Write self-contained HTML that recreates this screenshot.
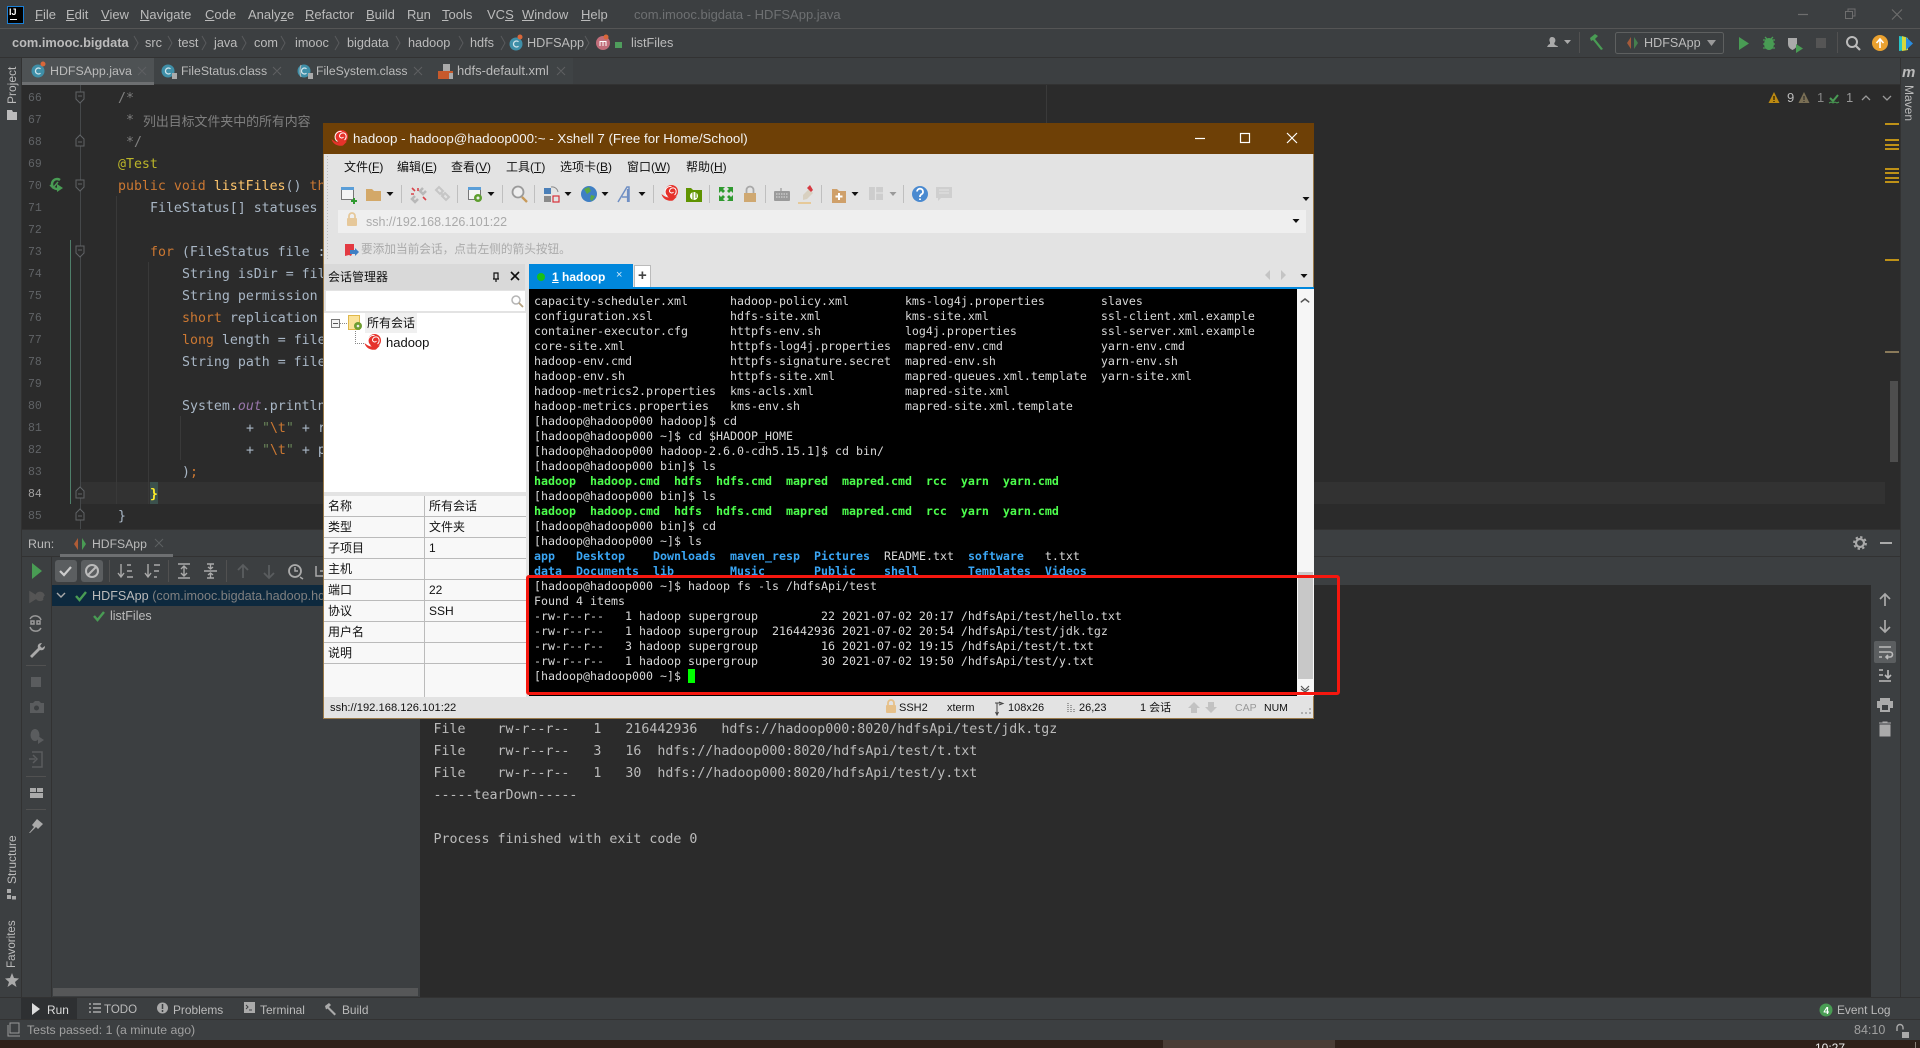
<!DOCTYPE html>
<html><head><meta charset="utf-8"><style>
html,body{margin:0;padding:0;background:#2b2b2b;width:1920px;height:1048px;overflow:hidden}
body{position:relative;font-family:"Liberation Sans","Noto Sans CJK SC",sans-serif;color:#bbb;font-size:13px}
.b,.t{position:absolute}
.t{white-space:pre;line-height:18px;height:18px}
.m{font-size:13px;top:6px;color:#bbb}
.br{font-size:12.7px;top:34px;color:#bbb}
.tab{font-size:12.6px;top:62px;color:#bbb}
.n{font-family:"Liberation Mono",monospace;font-size:11.5px;color:#606366;left:28px}
.c{font-family:"DejaVu Sans Mono",monospace;font-size:13.25px;line-height:22px;height:22px;color:#a9b7c6}
.k{color:#cc7832}.g{color:#808080}.s{color:#6a8759}
.con{font-family:"DejaVu Sans Mono",monospace;font-size:13.29px;line-height:22px;height:22px;color:#bbb;left:433.5px}
.tb{font-size:11.9px;top:1001px;color:#bbb}
svg{position:absolute;left:0;top:0;overflow:visible}
#x{position:absolute;left:323px;top:123px;width:991px;height:596px;background:#e3e3e3;z-index:10;box-shadow:inset 0 0 0 1px #9a7a4a}
.xm{font-size:12px;top:158px;color:#111}
.p{font-size:12px;color:#111}
pre{position:absolute;margin:0;left:534px;top:294px;font-family:"DejaVu Sans Mono",monospace;font-size:11.63px;line-height:15px;color:#d8d8d8}
pre b.g1{color:#4dff4d}pre b.b1{color:#3aa6f5}
.xs{font-size:11px;top:699px;color:#111}
</style></head><body>

<!-- IDE frame -->
<div class="b" style="left:0;top:0;width:1920px;height:28px;background:#3c3f41"></div>
<div class="b" style="left:0;top:28px;width:1920px;height:1px;background:#555"></div>
<div class="b" style="left:0;top:29px;width:1920px;height:28px;background:#3c3f41"></div>
<div class="b" style="left:0;top:57px;width:1920px;height:1px;background:#323232"></div>
<div class="b" style="left:0;top:58px;width:1920px;height:27px;background:#3c3f41"></div>
<div class="b" style="left:0;top:84px;width:1920px;height:1px;background:#323232"></div>
<div class="b" style="left:0;top:58px;width:21px;height:982px;background:#3c3f41"></div>
<div class="b" style="left:21px;top:58px;width:1px;height:939px;background:#323232"></div>
<div class="b" style="left:1900px;top:58px;width:20px;height:982px;background:#3c3f41;border-left:1px solid #323232;box-sizing:border-box"></div>

<!-- logo -->
<div class="b" style="left:7px;top:6px;width:15px;height:16px;background:#000;border:1px solid #1a7fd6"></div>
<div class="t" style="left:9px;top:5px;font:bold 9px/14px 'Liberation Sans';color:#fff">IJ</div>
<div class="b" style="left:10px;top:19px;width:7px;height:1px;background:#fff"></div>

<div class="t m" style="left:35px"><u>F</u>ile</div>
<div class="t m" style="left:66px"><u>E</u>dit</div>
<div class="t m" style="left:101px"><u>V</u>iew</div>
<div class="t m" style="left:140px"><u>N</u>avigate</div>
<div class="t m" style="left:205px"><u>C</u>ode</div>
<div class="t m" style="left:248px">Analy<u>z</u>e</div>
<div class="t m" style="left:305px"><u>R</u>efactor</div>
<div class="t m" style="left:366px"><u>B</u>uild</div>
<div class="t m" style="left:407px">R<u>u</u>n</div>
<div class="t m" style="left:442px"><u>T</u>ools</div>
<div class="t m" style="left:487px">VC<u>S</u></div>
<div class="t m" style="left:522px"><u>W</u>indow</div>
<div class="t m" style="left:581px"><u>H</u>elp</div>
<div class="t m" style="left:634px;color:#6e7072;font-size:13px">com.imooc.bigdata - HDFSApp.java</div>

<!-- breadcrumb -->
<div class="t br" style="left:12px;font-weight:bold;font-size:12.8px;color:#bbb">com.imooc.bigdata</div>
<div class="t br" style="left:145px">src</div>
<div class="t br" style="left:178px">test</div>
<div class="t br" style="left:214px">java</div>
<div class="t br" style="left:254px">com</div>
<div class="t br" style="left:295px">imooc</div>
<div class="t br" style="left:347px">bigdata</div>
<div class="t br" style="left:408px">hadoop</div>
<div class="t br" style="left:470px">hdfs</div>
<div class="t br" style="left:527px">HDFSApp</div>
<div class="t br" style="left:631px">listFiles</div>
<div class="t" style="left:1644px;top:34px;font-size:12.6px">HDFSApp</div>

<!-- tabs -->
<div class="b" style="left:22px;top:58px;width:132px;height:24px;background:#4e5254"></div>
<div class="b" style="left:22px;top:82px;width:132px;height:3px;background:#6d6f71"></div>
<div class="b" style="left:154px;top:58px;width:419px;height:26px;background:#3f4345"></div>
<div class="t tab" style="left:50px;font-size:12.4px">HDFSApp.java</div>
<div class="t tab" style="left:181px;font-size:12.3px">FileStatus.class</div>
<div class="t tab" style="left:316px;font-size:12.2px">FileSystem.class</div>
<div class="t tab" style="left:457px;font-size:13px">hdfs-default.xml</div>
<div class="t" style="font-size:12px;line-height:18px;color:#bbb;transform:rotate(-90deg);transform-origin:0 0;top:104px;left:3px">Project</div>

<!-- editor -->
<div class="b" style="left:22px;top:85px;width:1878px;height:444px;background:#2b2b2b"></div>
<div class="b" style="left:81px;top:482px;width:1804px;height:22px;background:#323232"></div>
<div class="b" style="left:1046px;top:85px;width:1px;height:444px;background:#3a3a3a"></div>
<div class="b" style="left:80px;top:85px;width:1px;height:444px;background:#45484a"></div>
<div class="b" style="left:70px;top:240px;width:1px;height:264px;background:#4f7f6a"></div>
<div class="b" style="left:116px;top:196px;width:1px;height:308px;background:#393939"></div>
<div class="b" style="left:148px;top:262px;width:1px;height:242px;background:#393939"></div>
<div class="b" style="left:180px;top:416px;width:1px;height:44px;background:#393939"></div>
<div class="b" style="left:1890px;top:381px;width:8px;height:81px;background:#4e4e4e"></div>
<div class="b" style="left:150px;top:482px;width:8px;height:22px;background:#3b514d"></div>

<div style="position:absolute;left:0;top:1px">
<div class="t n" style="top:89px">66</div><div class="t n" style="top:111px">67</div>
<div class="t n" style="top:133px">68</div><div class="t n" style="top:155px">69</div>
<div class="t n" style="top:177px">70</div><div class="t n" style="top:199px">71</div>
<div class="t n" style="top:221px">72</div><div class="t n" style="top:243px">73</div>
<div class="t n" style="top:265px">74</div><div class="t n" style="top:287px">75</div>
<div class="t n" style="top:309px">76</div><div class="t n" style="top:331px">77</div>
<div class="t n" style="top:353px">78</div><div class="t n" style="top:375px">79</div>
<div class="t n" style="top:397px">80</div><div class="t n" style="top:419px">81</div>
<div class="t n" style="top:441px">82</div><div class="t n" style="top:463px">83</div>
<div class="t n" style="top:485px;color:#a4a3a3">84</div><div class="t n" style="top:507px">85</div>

<div class="t c g" style="left:118px;top:87px">/*</div>
<div class="t c g" style="left:126px;top:109px">*</div>
<div class="t c g" style="left:143px;top:109px;font-family:'Noto Sans CJK SC',sans-serif;font-size:12.9px">列出目标文件夹中的所有内容</div>
<div class="t c g" style="left:126px;top:131px">*/</div>
<div class="t c" style="left:118px;top:153px;color:#bbb529">@Test</div>
<div class="t c" style="left:118px;top:175px"><span class="k">public void </span><span style="color:#ffc66d">listFiles</span>() <span class="k">throws</span></div>
<div class="t c" style="left:150px;top:197px">FileStatus[] statuses</div>
<div class="t c" style="left:150px;top:241px"><span class="k">for</span> (FileStatus file :</div>
<div class="t c" style="left:182px;top:263px">String isDir = file</div>
<div class="t c" style="left:182px;top:285px">String permission</div>
<div class="t c" style="left:182px;top:307px"><span class="k">short</span> replication</div>
<div class="t c" style="left:182px;top:329px"><span class="k">long</span> length = file</div>
<div class="t c" style="left:182px;top:351px">String path = file</div>
<div class="t c" style="left:182px;top:395px">System.<i style="color:#9876aa">out</i>.println</div>
<div class="t c" style="left:246px;top:417px">+ <span class="s">"<span class="k">\t</span>"</span> + r</div>
<div class="t c" style="left:246px;top:439px">+ <span class="s">"<span class="k">\t</span>"</span> + p</div>
<div class="t c" style="left:182px;top:461px">)<span class="k">;</span></div>
<div class="t c" style="left:150px;top:483px;color:#ffef28;font-weight:bold">}</div>
<div class="t c" style="left:118px;top:505px">}</div>
</div>
<div class="t" style="left:1787px;top:89px;font-size:13px">9</div>
<div class="t" style="left:1817px;top:89px;font-size:13px;color:#888">1</div>
<div class="t" style="left:1846px;top:89px;font-size:13px;color:#999">1</div>
<div class="t" style="width:60px;font-size:12px;transform:rotate(90deg);transform-origin:0 0;left:1918px;top:85px;color:#bbb">Maven</div>
<div class="t" style="left:1902px;top:64px;font:italic bold 15px/18px 'Liberation Sans';color:#bbb">m</div>

<!-- run panel -->
<div class="b" style="left:22px;top:529px;width:1878px;height:468px;background:#3c3f41"></div>
<div class="b" style="left:22px;top:529px;width:1878px;height:1px;background:#323232"></div>
<div class="b" style="left:22px;top:556px;width:1878px;height:1px;background:#323232"></div>
<div class="b" style="left:60px;top:554px;width:113px;height:3px;background:#6d6f71"></div>
<div class="b" style="left:51px;top:557px;width:1px;height:440px;background:#323232"></div>
<div class="b" style="left:420px;top:585px;width:1451px;height:412px;background:#2b2b2b"></div>
<div class="b" style="left:52px;top:585px;width:368px;height:21px;background:#0d293e"></div>
<div class="b" style="left:53px;top:988px;width:365px;height:8px;background:#565758"></div>
<div class="t" style="left:28px;top:535px;font-size:12.4px;color:#bbb">Run:</div>
<div class="t" style="left:92px;top:535px;font-size:12.2px;color:#bbb">HDFSApp</div>
<div class="t" style="left:92px;top:587px;font-size:12.6px;color:#bbb">HDFSApp <span style="color:#808080">(com.imooc.bigdata.hadoop.hdfs.HDFSAppTest)</span></div>
<div class="t" style="left:110px;top:607px;font-size:12.5px;color:#bbb">listFiles</div>
<div class="b" style="left:55px;top:560px;width:22px;height:22px;background:#5b5e60;border-radius:3px"></div>
<div class="b" style="left:81px;top:560px;width:22px;height:22px;background:#5b5e60;border-radius:3px"></div>

<div class="t con" style="top:719px">File    rw-r--r--   1   216442936   hdfs://hadoop000:8020/hdfsApi/test/jdk.tgz</div>
<div class="t con" style="top:741px">File    rw-r--r--   3   16  hdfs://hadoop000:8020/hdfsApi/test/t.txt</div>
<div class="t con" style="top:763px">File    rw-r--r--   1   30  hdfs://hadoop000:8020/hdfsApi/test/y.txt</div>
<div class="t con" style="top:785px">-----tearDown-----</div>
<div class="t con" style="top:829px">Process finished with exit code 0</div>

<!-- left strip labels -->
<div class="t" style="font-size:12px;transform:rotate(-90deg);transform-origin:0 0;left:3px;top:884px;color:#bbb">Structure</div>
<div class="t" style="font-size:11.6px;transform:rotate(-90deg);transform-origin:0 0;left:3px;top:968px;color:#bbb">Favorites</div>

<!-- bottom -->
<div class="b" style="left:0;top:997px;width:1920px;height:1px;background:#323232"></div>
<div class="b" style="left:0;top:998px;width:1920px;height:21px;background:#3c3f41"></div>
<div class="b" style="left:21px;top:998px;width:56px;height:21px;background:#2e3032"></div>
<div class="b" style="left:0;top:1019px;width:1920px;height:1px;background:#323232"></div>
<div class="b" style="left:0;top:1020px;width:1920px;height:20px;background:#3c3f41"></div>
<div class="t tb" style="left:47px;color:#ddd">Run</div>
<div class="t tb" style="left:104px;font-size:11.5px">TODO</div>
<div class="t tb" style="left:173px">Problems</div>
<div class="t tb" style="left:260px">Terminal</div>
<div class="t tb" style="left:342px">Build</div>
<div class="t tb" style="left:1837px">Event Log</div>
<div class="t" style="left:27px;top:1021px;font-size:12.3px;color:#a0a0a0">Tests passed: 1 (a minute ago)</div>
<div class="t" style="left:1854px;top:1021px;font-size:12.5px;color:#a0a0a0">84:10</div>
<div class="b" style="left:0;top:1040px;width:1920px;height:8px;background:#2f211a"></div>
<div class="b" style="left:1163px;top:1040px;width:172px;height:8px;background:#4a3d36"></div>
<div class="b" style="left:1915px;top:1042px;width:1px;height:6px;background:#8a8078"></div>
<div class="t" style="left:1815px;top:1041px;font-size:12px;color:#eee;height:7px;overflow:hidden;line-height:14px">10:27</div>

<!-- IDE icons -->
<svg width="1920" height="1048" fill="none">
<defs>
<g id="ci"><circle cx="0" cy="0" r="6.5" fill="#3f8fa8"/><path d="M2.5-2.2A3 3 0 1 0 2.5 2.2" stroke="#cfe3ea" stroke-width="1.3"/></g>
<g id="fold"><path d="M-4-5H4V2L0 6-4 2Z" stroke="#606366" fill="#2b2b2b"/><path d="M-2-1H2" stroke="#606366"/></g>
<g id="foldup"><path d="M-4 5H4V-2L0-6-4-2Z" stroke="#606366" fill="#2b2b2b"/><path d="M-2 1H2" stroke="#606366"/></g>
<path id="ck" d="M-5 0-1.5 4 5-4" stroke="#499c54" stroke-width="2.4"/>
</defs>
<!-- window ctl -->
<path d="M1798 14.5H1808" stroke="#6e6e6e" stroke-width="1.2"/>
<path d="M1845.5 11.5h7v7h-7zM1848 11.5v-2.5h7v7h-2.5" stroke="#6e6e6e"/>
<path d="M1892 9.5l10 10M1902 9.5l-10 10" stroke="#6e6e6e" stroke-width="1.1"/>
<!-- chevrons -->
<g stroke="#595b5d"><path d="M134 36l4 7-4 7M168 36l4 7-4 7M202 36l4 7-4 7M242 36l4 7-4 7M281 36l4 7-4 7M335 36l4 7-4 7M396 36l4 7-4 7M459 36l4 7-4 7M501 36l4 7-4 7M585 36l4 7-4 7"/></g>
<use href="#ci" x="516" y="44"/><circle cx="520" cy="37" r="2.5" fill="#d9673a"/>
<circle cx="603" cy="43" r="7" fill="#c16d7a"/><path d="M600 46v-5M603 46v-5M606 46v-5M600 41.5h6" stroke="#fff"/><circle cx="606" cy="37" r="2.5" fill="#d9673a"/>
<path d="M615 42h7v6h-7z" fill="#4f9d5c"/>
<!-- tabs icons -->
<use href="#ci" x="38" y="71"/><circle cx="43" cy="64" r="2.5" fill="#d9673a"/>
<use href="#ci" x="168" y="71"/><rect x="172" y="73" width="5" height="6" fill="#aaa"/>
<use href="#ci" x="304" y="71"/><rect x="308" y="73" width="5" height="6" fill="#aaa"/>
<path d="M301 65q-2 6 0 12" stroke="#bbb"/>
<path d="M443 64h7v7h-7z" fill="#aaa"/><rect x="438" y="71" width="15" height="8" fill="#c75a2c"/><rect x="449" y="73" width="4" height="6" fill="#aaa"/>
<g stroke="#5e6062" stroke-width="1"><path d="M138 67l8 8M146 67l-8 8M273 67l8 8M281 67l-8 8M414 67l8 8M422 67l-8 8M557 67l8 8M565 67l-8 8"/></g>
<path d="M7 112h10v8H7zM7 112v-2h5l1 2" fill="#bbb"/>
<!-- right toolbar -->
<path d="M1547 47c1-2 2-3 3-3v-2c-1-1-1-5 2-5s4 3 3 5c-1 1-1 2 0 3 2 1 3 1 3 2z" fill="#aaa"/>
<path d="M1564 40h7l-3.5 4z" fill="#aaa"/>
<path d="M1579.5 32v21" stroke="#515151"/>
<path d="M1590 38l5-4 3 2-3 3 8 10-2 1-8-10-2 1z" fill="#499c54"/>
<rect x="1615.5" y="32.5" width="108" height="21" rx="2" stroke="#5e6060"/>
<path d="M1631 37l-4 6 4 6z" fill="#a45a3a"/><path d="M1634 37l4 6-4 6z" fill="#499c54" opacity=".7"/>
<path d="M1707 40h9l-4.5 6z" fill="#9a9a9a"/>
<path d="M1739 37l10 6.5-10 6.5z" fill="#499c54"/>
<g fill="#499c54"><ellipse cx="1769" cy="44" rx="5" ry="6"/><path d="M1763 40h12M1763 44h12M1763 48h12M1765 37l2 2M1773 37l-2 2" stroke="#499c54" stroke-width="1.3"/></g>
<path d="M1788 38h9v6q0 4-4.5 6q-4.5-2-4.5-6z" fill="#aaa"/><path d="M1796 44l7 4.5-7 4.5z" fill="#499c54"/>
<rect x="1816" y="38" width="10" height="10" fill="#555"/>
<path d="M1837.5 32v21" stroke="#515151"/>
<circle cx="1852" cy="42" r="5" stroke="#bbb" stroke-width="2"/><path d="M1856 46l4 4" stroke="#bbb" stroke-width="2.2"/>
<circle cx="1880" cy="43" r="8" fill="#eaa12f"/><path d="M1880 48v-8M1876.5 43l3.5-4 3.5 4" stroke="#fff" stroke-width="1.6"/>
<path d="M1899 36l7 1v13l-7 1z" fill="#27c4c8"/><path d="M1902 36l6 2v12l-6 1z" fill="#d6d83c"/><path d="M1906 37l7 6.5-7 6.5z" fill="#2a8cdf"/>
<!-- gutter icons -->
<use href="#fold" x="80" y="97"/><use href="#foldup" x="80" y="141"/><use href="#fold" x="80" y="185"/><use href="#fold" x="80" y="251"/><use href="#foldup" x="80" y="493"/><use href="#foldup" x="80" y="515"/>
<path d="M60 180a5 5 0 1 0 0 8" stroke="#499c54" stroke-width="2.4"/><path d="M50 185l3 3 5-6" stroke="#499c54" stroke-width="1.5"/><path d="M57 184l6 4-6 4z" fill="#499c54"/>
<!-- inspections -->
<path d="M1774 92l-5.5 11h11z" fill="#bd8a12"/><path d="M1774 96v4M1774 101v1" stroke="#000"/>
<path d="M1804 92l-5.5 11h11z" fill="#7a6f55"/><path d="M1804 96v4M1804 101v1" stroke="#222"/>
<path d="M1830 98l3 3 5-6" stroke="#499c54" stroke-width="2"/><path d="M1829 103l2-1 2 1 2-1 2 1 2-1" stroke="#499c54"/>
<path d="M1862 100l4-4 4 4M1883 96l4 4 4-4" stroke="#9a9a9a" stroke-width="1.3"/>
<g fill="#be9117"><rect x="1885" y="123" width="14" height="2"/><rect x="1885" y="139" width="14" height="2"/><rect x="1885" y="144" width="14" height="2"/><rect x="1885" y="148" width="14" height="2"/><rect x="1885" y="168" width="14" height="2"/><rect x="1885" y="172" width="14" height="2"/><rect x="1885" y="177" width="14" height="2"/><rect x="1885" y="181" width="14" height="2"/><rect x="1885" y="259" width="14" height="2"/></g>
<rect x="1885" y="351" width="14" height="2" fill="#8a7a5a"/>
<!-- run tab + toolbar -->
<path d="M78 538l-4 6 4 6z" fill="#b05c36"/><path d="M82 538l4 6-4 6z" fill="#499c54"/>
<path d="M155 539l8 8M163 539l-8 8" stroke="#5e6062"/>
<path d="M32 563l10 8-10 8z" fill="#499c54"/>
<path d="M60 571l4 4 7-8" stroke="#ccc" stroke-width="2.2"/>
<circle cx="92" cy="571" r="6" stroke="#bbb" stroke-width="2"/><path d="M88 575l8-8" stroke="#bbb" stroke-width="2"/>
<path d="M109.5 560v22M168.5 560v22M226.5 560v22" stroke="#515151"/>
<g stroke="#aaa" stroke-width="1.4">
<path d="M121 564v13M118 573l3 4 3-4M127 565h4M127 571h5M127 577h6"/>
<path d="M148 564v13M145 573l3 4 3-4M154 565h6M154 571h5M154 577h3"/>
<path d="M178 564h12M178 578h12M184 567v8M181 569l3-3 3 3M181 573l3 3 3-3"/>
<path d="M204 571h13M207 578h7M207 564h7M210.5 564v5M208 567l2.5 2 2.5-2M210.5 578v-5M208 575l2.5-2 2.5 2"/>
</g>
<g stroke="#5a5d5f" stroke-width="1.8"><path d="M243 578v-13M238 570l5-5 5 5M269 565v13M264 573l5 5 5-5"/></g>
<circle cx="295" cy="571" r="6" stroke="#aaa" stroke-width="1.8"/><path d="M295 567v4h3M300 577l3 2" stroke="#aaa" stroke-width="1.5"/>
<path d="M316 566v10h9M320 571h4" stroke="#aaa" stroke-width="1.5"/>
<!-- left col -->
<path d="M30 592l8 5-8 5zM44 596a4 4 0 1 0-1 3" fill="#555" stroke="#555" stroke-width="1.5"/>
<g stroke="#999" stroke-width="1.5"><path d="M30 619a6 6 0 0 1 11 1M41 628a6 6 0 0 1-11-1"/><rect x="31" y="621" width="3" height="3"/><rect x="37" y="621" width="3" height="3"/></g>
<path d="M30 656l8-8c-1-3 1-5 4-5l-2 3 2 2 3-2c0 3-2 5-5 4l-8 8z" fill="#aaa"/>
<path d="M26 665.5h20M26 776.5h20M26 809.5h20" stroke="#515151"/>
<rect x="31" y="677" width="10" height="10" fill="#5a5c5e"/>
<path d="M30 703h3l2-2h4l2 2h3v10h-14z" fill="#5a5c5e"/><circle cx="36.5" cy="708" r="2.5" fill="#3c3f41"/>
<g fill="#5a5c5e"><ellipse cx="35" cy="735" rx="4.5" ry="6"/><path d="M38 736l6 4-6 4z"/></g>
<path d="M29 759h6M33 755l4 4-4 4M32 752h10v15H32" stroke="#5a5c5e" stroke-width="1.5"/>
<g fill="#aaa"><rect x="30" y="788" width="6" height="4"/><rect x="37" y="788" width="6" height="4"/><rect x="30" y="793" width="13" height="5"/></g>
<path d="M29 833l5-6-2-2 5-6 6 5-5 5-2-2-6 6z" fill="#aaa"/>
<!-- tree -->
<path d="M57 593l4 4 4-4" stroke="#aaa" stroke-width="1.4"/>
<use href="#ck" x="81" y="596"/><use href="#ck" x="99" y="616"/>
<!-- left strip icons -->
<g fill="#aaa"><rect x="7" y="889" width="4" height="4"/><rect x="12" y="896" width="4" height="3.5"/><rect x="7" y="895" width="4" height="4"/></g>
<path d="M12 973l2 5 5 .5-4 3.5 1.5 5-4.500-3-4.500 3 1.500-5-4-3.500 5-.5z" fill="#aaa"/>
<!-- right icons -->
<g stroke="#aaa" stroke-width="1.7">
<path d="M1885 606v-12M1880 599l5-5 5 5"/>
<path d="M1885 620v12M1880 627l5 5 5-5"/></g>
<rect x="1874" y="641" width="22" height="22" rx="2" fill="#5b5e60"/>
<g stroke="#bbb" stroke-width="1.6" fill="none"><path d="M1879 647h12M1879 652h11a2.5 2.5 0 0 1 0 5h-4M1888 655l-2 2 2 2M1879 657h3"/>
<path d="M1879 670h4M1879 675h4M1879 681h12M1888 670v7M1885 675l3 3 3-3"/></g>
<path d="M1880 698h10v3h3v7h-3v4h-10v-4h-3v-7h3z" fill="#aaa"/><rect x="1882" y="705" width="6" height="5" fill="#3c3f41"/>
<path d="M1880 725h10v11h-10zM1879 723h12M1883 723v-1h4v1" fill="#aaa" stroke="#aaa"/>
<circle cx="1860" cy="543" r="4" stroke="#aaa" stroke-width="2.2"/><circle cx="1860" cy="543" r="6" stroke="#aaa" stroke-dasharray="2.4 2.3" stroke-width="1.8"/>
<path d="M1880 543h12" stroke="#aaa" stroke-width="2"/>
<!-- bottom icons -->
<path d="M32 1003l8 6-8 6z" fill="#ddd"/>
<path d="M89 1004h2M89 1008h2M89 1012h2M93 1004h8M93 1008h8M93 1012h8" stroke="#aaa" stroke-width="1.4"/>
<circle cx="162.5" cy="1008" r="5.5" fill="#aaa"/><path d="M162.5 1004v5M162.5 1010v2" stroke="#3c3f41" stroke-width="1.5"/>
<rect x="244" y="1002" width="11" height="11" fill="#aaa"/><path d="M246 1005l2 2-2 2M249 1010h3" stroke="#3c3f41"/>
<path d="M325 1006l4-3 2 2-2 2 7 7-1.5 1.5-7-7-1.5 1z" fill="#aaa"/>
<circle cx="1826" cy="1010" r="6.5" fill="#499c54"/><text x="1823.5" y="1014" fill="#fff" font-size="10" font-family="Liberation Sans" font-weight="bold">4</text>
<path d="M8 1025v11h12M10 1023h9v10h-9z" stroke="#999"/>
<path d="M1897 1031v-3.5a3 3 0 0 1 6 0v2" stroke="#aaa" stroke-width="1.4"/><rect x="1902" y="1032" width="7" height="6" fill="#aaa"/>
</svg>

<!-- XSHELL -->
<div id="x"></div>
<div style="position:absolute;left:0;top:0;z-index:11;width:1920px;height:1048px">
<div class="b" style="left:323px;top:123px;width:991px;height:31px;background:#6e4006"></div>
<div class="t" style="left:353px;top:130px;font-size:13.33px;color:#f3f3f3">hadoop - hadoop@hadoop000:~ - Xshell 7 (Free for Home/School)</div>

<div class="t xm" style="left:344px">文件(<u>F</u>)</div>
<div class="t xm" style="left:397px">编辑(<u>E</u>)</div>
<div class="t xm" style="left:451px">查看(<u>V</u>)</div>
<div class="t xm" style="left:506px">工具(<u>T</u>)</div>
<div class="t xm" style="left:560px">选项卡(<u>B</u>)</div>
<div class="t xm" style="left:627px">窗口(<u>W</u>)</div>
<div class="t xm" style="left:686px">帮助(<u>H</u>)</div>

<div class="b" style="left:338px;top:210px;width:968px;height:23px;background:#efefef"></div>
<div class="t" style="left:366px;top:213px;font-size:12.5px;color:#aaa">ssh://192.168.126.101:22</div>
<div class="t" style="left:361px;top:241px;font-size:11.67px;color:#aaa">要添加当前会话，点击左侧的箭头按钮。</div>

<!-- session manager -->
<div class="b" style="left:324px;top:264px;width:201px;height:26px;background:#d9d9d9"></div>
<div class="t p" style="left:328px;top:268px">会话管理器</div>
<div class="b" style="left:326px;top:291px;width:199px;height:20px;background:#fff"></div>
<div class="b" style="left:324px;top:313px;width:202px;height:179px;background:#fff"></div>
<div class="b" style="left:365px;top:313px;width:52px;height:20px;background:#f0f0f0"></div>
<div class="t p" style="left:367px;top:314px">所有会话</div>
<div class="t" style="left:386px;top:334px;font-size:13px;color:#111">hadoop</div>
<div class="b" style="left:324px;top:496px;width:202px;height:201px;background:#f8f8f8"></div>
<div class="b" style="left:424px;top:496px;width:1px;height:201px;background:#bbb"></div>
<div class="b" style="left:324px;top:516px;width:202px;height:1px;background:#bbb"></div>
<div class="b" style="left:324px;top:537px;width:202px;height:1px;background:#bbb"></div>
<div class="b" style="left:324px;top:558px;width:202px;height:1px;background:#bbb"></div>
<div class="b" style="left:324px;top:579px;width:202px;height:1px;background:#bbb"></div>
<div class="b" style="left:324px;top:600px;width:202px;height:1px;background:#bbb"></div>
<div class="b" style="left:324px;top:621px;width:202px;height:1px;background:#bbb"></div>
<div class="b" style="left:324px;top:642px;width:202px;height:1px;background:#bbb"></div>
<div class="b" style="left:324px;top:663px;width:202px;height:1px;background:#bbb"></div>
<div class="t p" style="left:328px;top:497px">名称</div><div class="t p" style="left:429px;top:497px">所有会话</div>
<div class="t p" style="left:328px;top:518px">类型</div><div class="t p" style="left:429px;top:518px">文件夹</div>
<div class="t p" style="left:328px;top:539px">子项目</div><div class="t p" style="left:429px;top:539px">1</div>
<div class="t p" style="left:328px;top:560px">主机</div>
<div class="t p" style="left:328px;top:581px">端口</div><div class="t p" style="left:429px;top:581px">22</div>
<div class="t p" style="left:328px;top:602px">协议</div><div class="t p" style="left:429px;top:602px">SSH</div>
<div class="t p" style="left:328px;top:623px">用户名</div>
<div class="t p" style="left:328px;top:644px">说明</div>

<!-- tabs -->
<div class="b" style="left:529px;top:264px;width:104px;height:25px;background:#0087dc"></div>
<div class="b" style="left:529px;top:287px;width:785px;height:2px;background:#0087dc"></div>
<div class="b" style="left:634px;top:265px;width:17px;height:22px;background:#fff;box-sizing:border-box;border:1px solid #bbb;border-bottom:0"></div>
<div class="t" style="left:552px;top:268px;font-size:12px;font-weight:bold;color:#fff"><u>1</u> hadoop</div>
<div class="t" style="left:638px;top:267px;font-size:15px;font-weight:bold;color:#444">+</div>
<div class="t" style="left:616px;top:266px;font-size:11px;color:#cfe8f8">×</div>

<!-- terminal -->
<div class="b" style="left:529px;top:289px;width:768px;height:407px;background:#000"></div>
<div class="b" style="left:1297px;top:289px;width:17px;height:407px;background:#f6f6f6"></div>
<div class="b" style="left:1298px;top:572px;width:15px;height:107px;background:#c8c8c8"></div>
<pre>capacity-scheduler.xml      hadoop-policy.xml        kms-log4j.properties        slaves
configuration.xsl           hdfs-site.xml            kms-site.xml                ssl-client.xml.example
container-executor.cfg      httpfs-env.sh            log4j.properties            ssl-server.xml.example
core-site.xml               httpfs-log4j.properties  mapred-env.cmd              yarn-env.cmd
hadoop-env.cmd              httpfs-signature.secret  mapred-env.sh               yarn-env.sh
hadoop-env.sh               httpfs-site.xml          mapred-queues.xml.template  yarn-site.xml
hadoop-metrics2.properties  kms-acls.xml             mapred-site.xml
hadoop-metrics.properties   kms-env.sh               mapred-site.xml.template
[hadoop@hadoop000 hadoop]$ cd
[hadoop@hadoop000 ~]$ cd $HADOOP_HOME
[hadoop@hadoop000 hadoop-2.6.0-cdh5.15.1]$ cd bin/
[hadoop@hadoop000 bin]$ ls
<b class="g1">hadoop  hadoop.cmd  hdfs  hdfs.cmd  mapred  mapred.cmd  rcc  yarn  yarn.cmd</b>
[hadoop@hadoop000 bin]$ ls
<b class="g1">hadoop  hadoop.cmd  hdfs  hdfs.cmd  mapred  mapred.cmd  rcc  yarn  yarn.cmd</b>
[hadoop@hadoop000 bin]$ cd
[hadoop@hadoop000 ~]$ ls
<b class="b1">app   Desktop    Downloads  maven_resp  Pictures</b>  README.txt  <b class="b1">software</b>   t.txt
<b class="b1">data  Documents  lib        Music       Public    shell       Templates  Videos</b>
[hadoop@hadoop000 ~]$ hadoop fs -ls /hdfsApi/test
Found 4 items
-rw-r--r--   1 hadoop supergroup         22 2021-07-02 20:17 /hdfsApi/test/hello.txt
-rw-r--r--   1 hadoop supergroup  216442936 2021-07-02 20:54 /hdfsApi/test/jdk.tgz
-rw-r--r--   3 hadoop supergroup         16 2021-07-02 19:15 /hdfsApi/test/t.txt
-rw-r--r--   1 hadoop supergroup         30 2021-07-02 19:50 /hdfsApi/test/y.txt
[hadoop@hadoop000 ~]$ </pre>
<div class="b" style="left:688px;top:669px;width:7px;height:14px;background:#00ff00"></div>

<!-- status -->
<div class="t xs" style="left:330px;font-size:11.2px">ssh://192.168.126.101:22</div>
<div class="t xs" style="left:899px">SSH2</div>
<div class="t xs" style="left:947px">xterm</div>
<div class="t xs" style="left:1008px">108x26</div>
<div class="t xs" style="left:1079px">26,23</div>
<div class="t xs" style="left:1140px">1 会话</div>
<div class="t xs" style="left:1235px;color:#999;font-size:10.5px">CAP</div>
<div class="t xs" style="left:1264px;font-size:10.5px">NUM</div>

<!-- red rect -->
<div class="b" style="left:526px;top:575px;width:814px;height:120px;box-sizing:border-box;border:3px solid #f5170f;border-radius:3px;z-index:30"></div>

<svg width="1920" height="1048" fill="none">
<defs>
<g id="lg"><circle cx="1.5" cy="-1.5" r="6.5" fill="#e6322b"/><path d="M-8.5 1C-7 7-1 8.500 3 7.500L7 3.500-1 4.500C-4 4.500-6 3-8.500 1z" fill="#e6322b"/><path d="M-2.500 3.500a5.500 5.500 0 0 1 4-10M4.500 2a4.500 4.500 0 0 0 .5-6.500 3.500 3.500 0 0 0-5.500 2.500 2.200 2.200 0 0 0 4 1" stroke="#fff" stroke-width="1"/></g>
<path id="ar" d="M-3.5-2H3.5L0 2z" fill="#111"/>
</defs>
<use href="#lg" x="340" y="138"/>
<path d="M1195 138.5H1205" stroke="#fff" stroke-width="1.2"/>
<rect x="1240.5" y="133.5" width="9" height="9" stroke="#fff" stroke-width="1.2"/>
<path d="M1287 133l10 10M1297 133l-10 10" stroke="#fff" stroke-width="1.2"/>
<!-- grip -->
<path d="M327.5 156V260" stroke="#bdbdbd" stroke-dasharray="1 2"/>
<!-- toolbar -->
<g><rect x="341.5" y="187.5" width="12" height="12" stroke="#777" fill="#f4f4f4"/><rect x="341" y="187" width="13" height="3" fill="#5a9ed8"/><path d="M351 201h6M354 198v6" stroke="#2f9a2f" stroke-width="2"/></g>
<path d="M366 189h6l2 2h7v10h-15z" fill="#d3a868"/>
<use href="#ar" x="390" y="194"/>
<path d="M401.5 185v18M457.5 185v18M502.5 185v18M534.5 185v18M653.5 185v18M709.5 185v18M765.5 185v18M821.5 185v18M903.5 185v18" stroke="#bfbfbf"/>
<g stroke="#b8b8b8" stroke-width="2.5"><path d="M415 196l-3 3 3 3 3-3M423 188l-3 3 3 3 3-3"/></g><path d="M412 188l3 3M426 200l-3-3M418 188v3M411 194h3" stroke="#d8454b" stroke-width="1.6"/>
<path d="M436 190l3-3 4 4-3 3zM442 196l3-3 4 4-3 3zM441 193l3 3" stroke="#c6c6c6" stroke-width="2"/>
<rect x="468.5" y="187.5" width="12" height="12" stroke="#777" fill="#f4f4f4"/><rect x="468" y="187" width="13" height="3" fill="#5a9ed8"/><circle cx="478" cy="198" r="4" fill="#5e9e2e"/><circle cx="478" cy="198" r="1.5" fill="#eee"/>
<use href="#ar" x="491" y="194"/>
<circle cx="518" cy="192" r="5.5" stroke="#9a9a9a" stroke-width="1.8" fill="#eee"/><path d="M522 197l5 5" stroke="#c89a5a" stroke-width="2.4"/>
<g><rect x="544" y="188" width="7" height="6" fill="#4a7fb8"/><rect x="544" y="196" width="7" height="6" fill="#8a8a8a"/><rect x="553" y="196" width="6" height="6" stroke="#d8313a" stroke-width="1.2"/><path d="M551 187a6 6 0 0 1 7 5" stroke="#888"/></g>
<use href="#ar" x="568" y="194"/>
<circle cx="589" cy="194" r="8" fill="#3f7fc4"/><path d="M584 189l5-2 2 4-4 3zM591 195l4 1-3 5-2-2z" fill="#5ca845"/>
<use href="#ar" x="605" y="194"/>
<path d="M618 202l9-15h2v15M622 197h7" stroke="#6f8fc4" stroke-width="1.5"/>
<path d="M628 189v13" stroke="#6f8fc4" stroke-width="2.2"/>
<use href="#ar" x="642" y="194"/>
<use href="#lg" x="670" y="193"/>
<path d="M686 188h5l2 2h9v12h-16z" fill="#5f9300"/><circle cx="694" cy="196" r="4" fill="#fff"/><path d="M693 192v8M696 192v6" stroke="#5f9300"/>
<g fill="#2f9a2f"><path d="M719 187h6l-2 2 2 2-2 2-2-2-2 2zM733 187v6l-2-2-2 2-2-2 2-2-2-2zM719 201v-6l2 2 2-2 2 2-2 2 2 2zM733 201h-6l2-2-2-2 2-2 2 2 2-2z"/></g>
<rect x="744" y="193" width="12" height="9" fill="#cfa871"/><path d="M746.5 193v-3a3.5 3.5 0 0 1 7 0v3" stroke="#a8a8a8" stroke-width="1.8"/>
<rect x="774" y="191" width="16" height="10" rx="1" fill="#9a9a9a"/><path d="M776 194h12M776 197h12" stroke="#ddd" stroke-dasharray="1.5 1"/><path d="M781 191v-3" stroke="#888"/>
<path d="M803 195l6-6 4 4-6 6-4 1z" fill="#d8d0c0"/><path d="M807 188l3-3 3 5-2 2z" fill="#d63a42"/><path d="M798 203h13" stroke="#e8b868" stroke-width="1.2"/>
<path d="M832 189h5l2 2h7v12h-14z" fill="#cfa06a"/><path d="M839 193v7M835.5 196.5h7" stroke="#fff" stroke-width="2"/>
<use href="#ar" x="855" y="194"/>
<rect x="869" y="187" width="14" height="13" fill="#cdcdcd"/><path d="M875.5 187v13M875.5 193h8" stroke="#e3e3e3" stroke-width="1.2"/>
<path d="M889.5 192h7l-3.5 4z" fill="#999"/>
<circle cx="920" cy="194" r="8" fill="#4a8ad0"/><path d="M917 191.5a3 3 0 1 1 4 3l-1 1.5v1M920 198.5v1.5" stroke="#fff" stroke-width="1.8"/>
<path d="M936 187h16v11h-11l-3 3v-3h-2z" fill="#cfcfcf"/><path d="M939 190h10M939 193h10" stroke="#e3e3e3"/>
<use href="#ar" x="1306" y="199"/><use href="#ar" x="1296" y="221"/><use href="#ar" x="1304" y="276"/>
<path d="M1270 270l-5 5 5 5zM1281 270l5 5-5 5z" fill="#c4c4c4"/>
<rect x="347" y="218" width="10" height="8" rx="1" fill="#e6c89a"/><path d="M349 218v-2a3 3 0 0 1 6 0v2" stroke="#e6c89a" stroke-width="1.800"/>
<path d="M345 244h9v6l-3 6-2-1-4 1z" fill="#e33a42"/><path d="M350 250h5v-2l4 4-4 4v-2h-5z" fill="#3f7fc4"/>
<!-- panel header -->
<path d="M494 273h4v6h-4zM493 279h6M496 279v3" stroke="#111" stroke-width="1.2"/>
<path d="M511 272l8 8M519 272l-8 8" stroke="#111" stroke-width="1.6"/>
<circle cx="516" cy="300" r="4" stroke="#b5b5b5" stroke-width="1.5"/><path d="M519 303l4 4" stroke="#b5a17e" stroke-width="1.8"/>
<!-- tree -->
<rect x="331.5" y="319.5" width="8" height="8" stroke="#777" fill="#f4f4f4"/><path d="M333 323.5h5" stroke="#555"/>
<path d="M340 323.5h8M355.5 331v12.5H365" stroke="#888" stroke-dasharray="1 1"/>
<rect x="348.5" y="315.5" width="11" height="14" fill="#fbe39a" stroke="#e0b84a"/><circle cx="358" cy="326" r="4" fill="#6f9e32"/><circle cx="358" cy="326" r="1.3" fill="#eee"/>
<use href="#lg" x="373" y="342"/>
<!-- tab dot -->
<circle cx="541" cy="277" r="4" fill="#18c018"/>
<path d="M1305 300l-4 3-.5-1.500 4.500-3.500 4.500 3.500-.5 1.500z" fill="#555"/>
<path d="M1301 686l4 4 4-4M1301 689l4 3 4-3" stroke="#555" stroke-width="1.200"/>
<!-- status icons -->
<rect x="886" y="705" width="10" height="8" rx="1" fill="#e6c089"/><path d="M888 705v-2a3 3 0 0 1 6 0v2" stroke="#e6c089" stroke-width="1.800"/>
<path d="M997 703v11M995 703h7M999 702l4 1.500-4 1.500M995.500 712l1.500 3 1.500-3" stroke="#444"/>
<path d="M1068 703v9M1071 705v7M1074 709v3" stroke="#555" stroke-dasharray="1 1"/>
<path d="M1194 702l6 6h-3v5h-6v-5h-3z" fill="#c2c2c2"/><path d="M1211 713l6-6h-3v-5h-6v5h-3z" fill="#c2c2c2"/>
<g fill="#b0b0b0"><rect x="1309" y="708" width="2" height="2"/><rect x="1305" y="712" width="2" height="2"/><rect x="1309" y="712" width="2" height="2"/><rect x="1301" y="712" width="2" height="2"/></g>
</svg>
</div>
</body></html>
